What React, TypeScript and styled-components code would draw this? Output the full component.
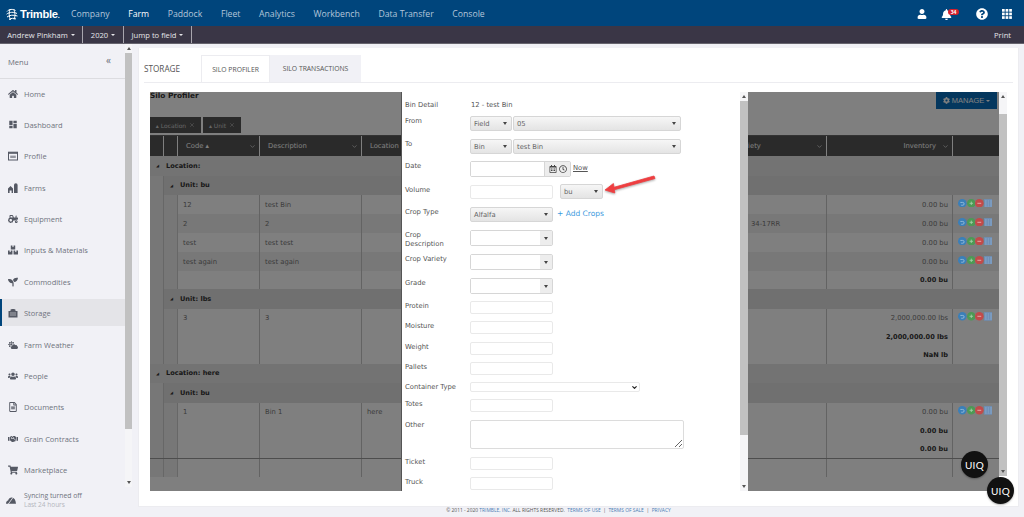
import React from "react";
import styled, { createGlobalStyle } from "styled-components";
import {
  FaBell,
  FaBoxes,
  FaCloudSun,
  FaCog,
  FaHandshake,
  FaHome,
  FaQuestionCircle,
  FaRegCalendarAlt,
  FaRegClock,
  FaRegFileAlt,
  FaSeedling,
  FaShoppingCart,
  FaTractor,
  FaUser,
  FaUsers,
} from "react-icons/fa";
import { MdDashboard } from "react-icons/md";
import { ChevronDown, X } from "lucide-react";

const GlobalStyle = createGlobalStyle`
  * { box-sizing: border-box; }
  html, body { margin: 0; padding: 0; background: #f1f1f6; }
  input, textarea, select { font-family: "DejaVu Sans", sans-serif; outline: none; }
`;

const COLUMNS = "14px 14px 82px 102px 100px 267px 98px 126px 46px";
const navLinks = ["Company", "Farm", "Paddock", "Fleet", "Analytics", "Workbench", "Data Transfer", "Console"];

const ProfileIcon = () => (
  <svg width="10" height="10" viewBox="0 0 10 10">
    <rect x="0.5" y="1.2" width="9" height="7.8" fill="none" stroke="currentColor" />
    <rect x="0.5" y="1.2" width="9" height="1.6" fill="currentColor" />
    <rect x="2.2" y="4.6" width="5.6" height="2.4" fill="currentColor" opacity="0.6" />
  </svg>
);

const FarmsIcon = () => (
  <svg width="10" height="10" viewBox="0 0 10 10" fill="currentColor">
    <path d="M0 10V5.5L2.6 3l2.4 2.5V10H3.6V7.4H1.6V10z" />
    <path d="M6 10V2a1.6 1.6 0 0 1 3.6 0v8z" />
  </svg>
);

const StorageIcon = () => (
  <svg width="10" height="10" viewBox="0 0 10 10" fill="currentColor">
    <path d="M2.5 1.8C2.5.6 7.5.6 7.5 1.8V3H9.5v6.5H.5V3h2z" />
    <path d="M2 5h6M2 7h6" stroke="#e4e4e8" strokeWidth="0.6" />
  </svg>
);

const SyncOffIcon = () => (
  <svg width="11" height="10" viewBox="0 0 11 10" fill="currentColor">
    <path d="M0 9c0-2 1-3.2 2.3-3.5C3 3.2 5 1.8 7 2.3 9 2.8 10.7 5 11 9z" />
    <path d="M2.5 9.5L8.5 1.2" stroke="#f1f1f6" strokeWidth="0.9" />
  </svg>
);

const GridIcon = () => (
  <svg width="10" height="10" viewBox="0 0 10 10" fill="#fff">
    {[0, 3.6, 7.2].flatMap((y) =>
      [0, 3.6, 7.2].map((x) => <rect key={`${x}-${y}`} x={x} y={y} width="2.7" height="2.7" />)
    )}
  </svg>
);

const GlobeIcon = () => (
  <svg width="13" height="13" viewBox="0 0 13 13" fill="none" stroke="#fff" strokeWidth="1">
    <path d="M1 3.5C3 1 7 .8 9.5 2.5M.6 6.2C3.5 3.8 8 3.8 11 5.5M1 9c2.8-2.2 6.5-2.2 10.5-1M3 11.5c2-1.5 5-1.5 7-.5" />
    <path d="M4 1.2C2.8 4.5 3 8.5 4.5 12M7.8 1.3c1.4 3 1.6 7 .4 10.2" />
  </svg>
);

const sideItems: { label: string; icon: React.ReactNode; active?: boolean }[] = [
  { label: "Home", icon: <FaHome size={10} /> },
  { label: "Dashboard", icon: <MdDashboard size={11} /> },
  { label: "Profile", icon: <ProfileIcon /> },
  { label: "Farms", icon: <FarmsIcon /> },
  { label: "Equipment", icon: <FaTractor size={10} /> },
  { label: "Inputs & Materials", icon: <FaBoxes size={10} /> },
  { label: "Commodities", icon: <FaSeedling size={10} /> },
  { label: "Storage", icon: <StorageIcon />, active: true },
  { label: "Farm Weather", icon: <FaCloudSun size={10} /> },
  { label: "People", icon: <FaUsers size={10} /> },
  { label: "Documents", icon: <FaRegFileAlt size={10} /> },
  { label: "Grain Contracts", icon: <FaHandshake size={10} /> },
  { label: "Marketplace", icon: <FaShoppingCart size={10} /> },
];

const ScrollBar = ({ width, height, offset, thumb }: { width: number; height: number; offset: number; thumb: number }) => (
  <Track $w={width} $h={height}>
    <TrackArrow $up />
    <Thumb $offset={offset} $h={thumb} />
    <TrackArrow />
  </Track>
);

const RowActions = () => (
  <Actions>
    <svg viewBox="0 0 8 8">
      <circle cx="4" cy="4" r="4" fill="#3b7fb8" />
      <path d="M2.2 3.2h2.2a1.3 1.3 0 0 1 0 2.6H3" fill="none" stroke="#9cc0dc" strokeWidth="0.8" />
    </svg>
    <svg viewBox="0 0 8 8">
      <circle cx="4" cy="4" r="4" fill="#4d9a55" />
      <path d="M4 2.4v3.200M2.4 4h3.200" stroke="#a6cfa9" strokeWidth="0.8" />
    </svg>
    <svg viewBox="0 0 8 8">
      <circle cx="4" cy="4" r="4" fill="#c24a4a" />
      <path d="M2.2 4h3.600" stroke="#e2aaaa" strokeWidth="0.9" />
    </svg>
    <svg viewBox="0 0 8 8">
      <rect x="0.3" y="0.3" width="7.4" height="7.4" fill="#7c9cc0" stroke="#6a8cb4" strokeWidth="0.6" />
      <path d="M3 1v6M5.2 1v6" stroke="#5f82ad" strokeWidth="0.5" />
    </svg>
  </Actions>
);

const DataRow = ({
  code,
  desc,
  location,
  variety,
  amount,
  alt,
}: {
  code: string;
  desc: string;
  location?: string;
  variety?: string;
  amount: string;
  alt?: boolean;
}) => (
  <Row $alt={alt}>
    <Indent />
    <Indent />
    <Cell>{code}</Cell>
    <Cell>{desc}</Cell>
    <Cell>{location}</Cell>
    <Cell />
    <Cell $pad={22}>{variety}</Cell>
    <Cell $right>{amount}</Cell>
    <Cell $last>
      <RowActions />
    </Cell>
  </Row>
);

const TotalRow = ({ amount }: { amount?: string }) => (
  <Row $total>
    <Indent />
    <Indent />
    <Cell />
    <Cell />
    <Cell />
    <Cell />
    <Cell />
    <Cell $right $bold>
      {amount}
    </Cell>
    <Cell $last />
  </Row>
);

const UnitHeader = ({ label }: { label: string }) => (
  <UnitRow>
    <Indent />
    <UnitLabel>
      <Toggle>◢</Toggle>
      {label}
    </UnitLabel>
  </UnitRow>
);

const DropDown = ({ width, value }: { width: number; value: string }) => (
  <Drop $w={width}>
    <span>{value}</span>
    <Caret />
  </Drop>
);

const Combo = () => (
  <ComboBox>
    <input />
    <ComboBtn>
      <Caret />
    </ComboBtn>
  </ComboBox>
);

const Field = ({ label, h, children }: { label: React.ReactNode; h: number; children?: React.ReactNode }) => (
  <FormRow $h={h}>
    <FormLabel>{label}</FormLabel>
    {children}
  </FormRow>
);

export default function App() {
  return (
    <Page>
      <GlobalStyle />
      <TopBar>
        <Logo>
          <GlobeIcon />
          <LogoText>
            Trimble<small>.</small>
          </LogoText>
        </Logo>
        <Nav>
          {navLinks.map((link) => (
            <NavLink key={link} $active={link === "Farm"}>
              {link}
            </NavLink>
          ))}
        </Nav>
        <TopIcons>
          <FaUser size={10} color="#fff" />
          <Bell>
            <FaBell size={11} color="#fff" />
            <Badge>34</Badge>
          </Bell>
          <FaQuestionCircle size={12} color="#fff" />
          <GridIcon />
        </TopIcons>
      </TopBar>
      <SubBar>
        <SubItem $w={83}>
          Andrew Pinkham <SubCaret />
        </SubItem>
        <SubItem $w={41}>
          2020 <SubCaret />
        </SubItem>
        <SubItem $w={68}>
          Jump to field <SubCaret />
        </SubItem>
        <PrintLink>Print</PrintLink>
      </SubBar>
      <Body>
        <Sidebar>
          <MenuHead>
            <span>Menu</span>
            <Collapse>«</Collapse>
          </MenuHead>
          {sideItems.map((item) => (
            <SideItem key={item.label} $active={item.active}>
              <SideIcon>{item.icon}</SideIcon>
              {item.label}
            </SideItem>
          ))}
          <Sync>
            <SideIcon>
              <SyncOffIcon />
            </SideIcon>
            <div>
              <SyncTitle>Syncing turned off</SyncTitle>
              <SyncSub>Last 24 hours</SyncSub>
            </div>
          </Sync>
        </Sidebar>
        <ScrollBar width={7} height={443} offset={9} thumb={376} />
        <Main>
          <Card>
            <CardHead>
              <CardTitle>STORAGE</CardTitle>
              <Tab $w={69} $active>
                SILO PROFILER
              </Tab>
              <Tab $w={91}>SILO TRANSACTIONS</Tab>
            </CardHead>
            <Panel>
              <View>
                <TitleRow>
                  <ViewTitle>Silo Profiler</ViewTitle>
                  <Manage>
                    <FaCog size={7} /> MANAGE <SubCaret />
                  </Manage>
                </TitleRow>
                <Chips>
                  <Chip $w={51}>
                    ▴ Location <X size={6} />
                  </Chip>
                  <Chip $w={38}>
                    ▴ Unit <X size={6} />
                  </Chip>
                </Chips>
                <HeadRow>
                  <HeadCell />
                  <HeadCell />
                  <HeadCell>
                    Code ▴ <ChevronDown size={7} />
                  </HeadCell>
                  <HeadCell>
                    Description <ChevronDown size={7} />
                  </HeadCell>
                  <HeadCell>Location</HeadCell>
                  <HeadCell />
                  <HeadCell>
                    Variety <ChevronDown size={7} />
                  </HeadCell>
                  <HeadCell $right>
                    Inventory <ChevronDown size={7} />
                  </HeadCell>
                  <HeadCell />
                </HeadRow>
                <GroupRow>
                  <Toggle>◢</Toggle>Location:
                </GroupRow>
                <UnitHeader label="Unit: bu" />
                <DataRow code="12" desc="test Bin" amount="0.00 bu" />
                <DataRow code="2" desc="2" variety="34-17RR" amount="0.00 bu" alt />
                <DataRow code="test" desc="test test" amount="0.00 bu" />
                <DataRow code="test again" desc="test again" amount="0.00 bu" alt />
                <TotalRow amount="0.00 bu" />
                <UnitHeader label="Unit: lbs" />
                <DataRow code="3" desc="3" amount="2,000,000.00 lbs" />
                <TotalRow amount="2,000,000.00 lbs" />
                <TotalRow amount="NaN lb" />
                <GroupRow>
                  <Toggle>◢</Toggle>Location: here
                </GroupRow>
                <UnitHeader label="Unit: bu" />
                <DataRow code="1" desc="Bin 1" location="here" amount="0.00 bu" />
                <TotalRow amount="0.00 bu" />
                <TotalRow amount="0.00 bu" />
                <FootRow>
                  <TotalRow />
                </FootRow>
                <Dim />
              </View>
              <ScrollBar width={8} height={384} offset={22} thumb={362} />
              <Modal>
                <Form>
                  <Field label="Bin Detail" h={16}>
                    <Value>12 - test Bin</Value>
                  </Field>
                  <Field label="From" h={23}>
                    <DropDown width={42} value="Field" />
                    <DropDown width={168} value="05" />
                  </Field>
                  <Field label="To" h={22}>
                    <DropDown width={42} value="Bin" />
                    <DropDown width={168} value="test Bin" />
                  </Field>
                  <Field label="Date" h={24}>
                    <DateBox>
                      <input />
                      <DateAddon>
                        <FaRegCalendarAlt size={8} />
                        <FaRegClock size={8} />
                      </DateAddon>
                    </DateBox>
                    <NowLink>Now</NowLink>
                  </Field>
                  <Field label="Volume" h={22}>
                    <TextBox $h={14} />
                    <VolumeUnit>
                      <DropDown width={43} value="bu" />
                    </VolumeUnit>
                    <Arrow width="54" height="22" viewBox="0 0 54 22">
                      <path
                        d="M51 3L11 14.3l-.6-3.8L2 17l9.8 3-.5-3.3L52 5.5z"
                        fill="#ee3e40"
                        stroke="#ee3e40"
                        strokeWidth="0.8"
                        strokeLinejoin="round"
                      />
                    </Arrow>
                  </Field>
                  <Field label="Crop Type" h={23}>
                    <DropDown width={83} value="Alfalfa" />
                    <AddCrops>+ Add Crops</AddCrops>
                  </Field>
                  <Field
                    label={
                      <>
                        Crop
                        <br />
                        Description
                      </>
                    }
                    h={24}
                  >
                    <Combo />
                  </Field>
                  <Field label="Crop Variety" h={24}>
                    <Combo />
                  </Field>
                  <Field label="Grade" h={23}>
                    <Combo />
                  </Field>
                  <Field label="Protein" h={20}>
                    <TextBox />
                  </Field>
                  <Field label="Moisture" h={21}>
                    <TextBox />
                  </Field>
                  <Field label="Weight" h={20}>
                    <TextBox />
                  </Field>
                  <Field label="Pallets" h={20}>
                    <TextBox />
                  </Field>
                  <Field label="Container Type" h={17}>
                    <SelectWrap>
                      <NativeSelect />
                      <ChevronDown size={7} strokeWidth={4} />
                    </SelectWrap>
                  </Field>
                  <Field label="Totes" h={21}>
                    <TextBox />
                  </Field>
                  <Field label="Other" h={37}>
                    <TextArea />
                  </Field>
                  <Field label="Ticket" h={20}>
                    <TextBox />
                  </Field>
                  <Field label="Truck" h={14}>
                    <TextBox />
                  </Field>
                </Form>
                <ScrollBar width={8} height={399} offset={9} thumb={334} />
              </Modal>
            </Panel>
          </Card>
          <Footer>
            © 2011 - 2020 <FootLink>TRIMBLE, INC.</FootLink> ALL RIGHTS RESERVED. &nbsp;
            <FootLink>TERMS OF USE</FootLink> &nbsp;|&nbsp; <FootLink>TERMS OF SALE</FootLink> &nbsp;|&nbsp;{" "}
            <FootLink>PRIVACY</FootLink>
          </Footer>
        </Main>
      </Body>
      <Uiq $x={961} $y={451}>UIQ</Uiq>
      <Uiq $x={987} $y={477}>UIQ</Uiq>
    </Page>
  );
}

const Page = styled.div`
  position: relative;
  width: 1024px;
  height: 517px;
  overflow: hidden;
  display: flex;
  flex-direction: column;
  background: #f1f1f6;
  font-family: "Open Sans", sans-serif;
`;

const TopBar = styled.header`
  height: 26px;
  flex: none;
  display: flex;
  align-items: center;
  padding: 2px 0 0 6px;
  background: #00457c;
`;

const Logo = styled.div`
  display: flex;
  align-items: center;
  gap: 1px;
  width: 65px;
`;

const LogoText = styled.span`
  font-family: "Liberation Sans", sans-serif;
  font-weight: 700;
  font-size: 11.2px;
  letter-spacing: -0.3px;
  color: #fff;

  small {
    font-size: 7px;
  }
`;

const Nav = styled.nav`
  display: flex;
  gap: 18.6px;
`;

const NavLink = styled.span<{ $active?: boolean }>`
  font-size: 8.7px;
  color: ${({ $active }) => ($active ? "#fff" : "#b4c6da")};
`;

const TopIcons = styled.div`
  margin-left: auto;
  display: flex;
  align-items: center;
  gap: 14px;
  padding-right: 12px;
`;

const Bell = styled.div`
  position: relative;
  display: flex;
  margin-right: 10px;
`;

const Badge = styled.span`
  position: absolute;
  left: 7px;
  top: 0;
  width: 11px;
  height: 6px;
  border-radius: 3px;
  background: #d3202c;
  color: #fff;
  font-size: 5px;
  font-weight: 700;
  line-height: 6px;
  text-align: center;
`;

const SubBar = styled.div`
  height: 18px;
  flex: none;
  display: flex;
  align-items: center;
  background: #3a3646;
  border-bottom: 1px solid #66646e;
`;

const SubItem = styled.div<{ $w: number }>`
  width: ${({ $w }) => $w}px;
  height: 100%;
  display: flex;
  align-items: center;
  justify-content: center;
  gap: 3px;
  border-right: 1px solid #a8a6ae;
  color: #e6e6ea;
  font-size: 7.6px;
`;

const SubCaret = styled.i`
  display: inline-block;
  border-left: 2px solid transparent;
  border-right: 2px solid transparent;
  border-top: 2px solid currentColor;
`;

const PrintLink = styled.span`
  margin-left: auto;
  padding-right: 13px;
  color: #e6e6ea;
  font-size: 7.6px;
`;

const Body = styled.div`
  flex: 1;
  min-height: 0;
  display: flex;
`;

const Sidebar = styled.aside`
  width: 125px;
  flex: none;
  display: flex;
  flex-direction: column;
`;

const MenuHead = styled.div`
  height: 35px;
  flex: none;
  display: flex;
  align-items: center;
  justify-content: space-between;
  padding: 1px 14px 0 8px;
  border-bottom: 1px solid #dcdce0;
  color: #6a6e78;
  font-size: 7.6px;
`;

const Collapse = styled.span`
  font-size: 10px;
  margin-top: -3px;
`;

const SideItem = styled.div<{ $active?: boolean }>`
  height: 27px;
  margin-bottom: 4.4px;
  flex: none;
  display: flex;
  align-items: center;
  gap: 6px;
  padding-top: 2px;
  border-left: ${({ $active }) => ($active ? "2px solid #00457c" : "0")};
  padding-left: ${({ $active }) => ($active ? "6px" : "8px")};
  background: ${({ $active }) => ($active ? "#e4e4e8" : "transparent")};
  color: #6f737d;
  font-size: 7.5px;
`;

const SideIcon = styled.span`
  width: 10px;
  display: flex;
  justify-content: center;
  color: #555964;
`;

const Sync = styled.div`
  display: flex;
  align-items: center;
  gap: 8px;
  padding: 4px 0 0 6px;
`;

const SyncTitle = styled.div`
  font-size: 6.8px;
  line-height: 9px;
  color: #6f737d;
`;

const SyncSub = styled.div`
  font-size: 6.5px;
  line-height: 9px;
  color: #b3b6bd;
`;

const Track = styled.div<{ $w: number; $h: number }>`
  position: relative;
  width: ${({ $w }) => $w}px;
  height: ${({ $h }) => $h}px;
  flex: none;
  background: #f5f5f7;
`;

const Thumb = styled.div<{ $offset: number; $h: number }>`
  margin-top: ${({ $offset }) => $offset}px;
  height: ${({ $h }) => $h}px;
  background: #c1c1c1;
`;

const TrackArrow = styled.i<{ $up?: boolean }>`
  position: absolute;
  left: calc(50% - 2px);
  ${({ $up }) => ($up ? "top: 3px;" : "bottom: 3px;")}
  border-left: 2px solid transparent;
  border-right: 2px solid transparent;
  ${({ $up }) => ($up ? "border-bottom: 3px solid #555;" : "border-top: 3px solid #555;")}
`;

const Main = styled.main`
  flex: 1;
  min-width: 0;
  display: flex;
  flex-direction: column;
  padding: 4px 5px 0 6px;
`;

const Card = styled.section`
  height: 459px;
  flex: none;
  background: #fff;
  border: 1px solid #ececf0;
  border-top: 0;
`;

const CardHead = styled.div`
  height: 35px;
  margin: 0 5px;
  display: flex;
  align-items: flex-end;
  border-bottom: 1px solid #ececf0;
`;

const CardTitle = styled.h2`
  width: 57px;
  margin: 0 0 8px;
  font-weight: 400;
  font-size: 8.2px;
  color: #555;
`;

const Tab = styled.div<{ $active?: boolean; $w: number }>`
  width: ${({ $w }) => $w}px;
  height: 27px;
  display: flex;
  align-items: center;
  justify-content: center;
  font-size: 6.8px;
  white-space: nowrap;
  color: #555;
  background: ${({ $active }) => ($active ? "#fff" : "#f1f1f6")};
  border: ${({ $active }) => ($active ? "1px solid #ececf0" : "0")};
  border-bottom: 0;
`;

const Panel = styled.div`
  position: relative;
  margin: 9px 11px 0;
  height: 399px;
  display: flex;
  align-items: flex-start;
`;

const View = styled.div`
  position: relative;
  width: 849px;
  height: 399px;
  flex: none;
  background: #fff;
  font-family: "DejaVu Sans", sans-serif;
  font-size: 6.8px;
  color: #777;
`;

const Dim = styled.div`
  position: absolute;
  inset: 0;
  background: rgba(0, 0, 0, 0.5);
`;

const TitleRow = styled.div`
  height: 25px;
  display: flex;
  justify-content: space-between;
  align-items: flex-start;
  padding-right: 2px;
`;

const ViewTitle = styled.h3`
  margin: -2px 0 0;
  font-size: 7.35px;
  line-height: 11px;
  font-weight: 700;
  color: #333;
`;

const Manage = styled.div`
  width: 61px;
  height: 17px;
  display: flex;
  align-items: center;
  justify-content: center;
  gap: 2px;
  background: #086fbd;
  color: #fff;
  font-family: "Liberation Sans", sans-serif;
  font-size: 7.5px;
`;

const Chips = styled.div`
  height: 18px;
  display: flex;
  gap: 2px;
`;

const Chip = styled.div<{ $w: number }>`
  width: ${({ $w }) => $w}px;
  height: 16px;
  display: flex;
  align-items: center;
  justify-content: center;
  gap: 3px;
  background: #555;
  color: #ccc;
  font-size: 6px;
`;

const Row = styled.div<{ $total?: boolean; $alt?: boolean }>`
  display: grid;
  grid-template-columns: ${COLUMNS};
  height: ${({ $total }) => ($total ? "18px" : "19px")};
  background: ${({ $alt }) => ($alt ? "#f1f1f1" : "transparent")};
`;

const HeadRow = styled.div`
  display: grid;
  grid-template-columns: ${COLUMNS};
  height: 21px;
  background: #555;
  color: #fff;
  border-top: 1px solid #666;
`;

const HeadCell = styled.div<{ $right?: boolean }>`
  display: flex;
  align-items: center;
  justify-content: ${({ $right }) => ($right ? "flex-end" : "space-between")};
  gap: 6px;
  padding: 0 3px 0 8px;
  border-right: 1px solid #fff;
  font-size: 6.8px;
  color: #fff;

  &:last-child {
    border-right: 0;
  }

  svg {
    flex: none;
  }
`;

const Cell = styled.div<{ $right?: boolean; $bold?: boolean; $pad?: number; $last?: boolean }>`
  display: flex;
  align-items: center;
  justify-content: ${({ $right }) => ($right ? "flex-end" : "flex-start")};
  padding: 0 4px 0 ${({ $pad }) => $pad ?? 5}px;
  border-right: ${({ $last }) => ($last ? "0" : "1px solid #c6c6c6")};
  font-weight: ${({ $bold }) => ($bold ? 700 : 400)};
  font-size: ${({ $bold }) => ($bold ? "6.6px" : "6.8px")};
  color: ${({ $bold }) => ($bold ? "#333" : "#777")};
  white-space: nowrap;
  min-width: 0;
`;

const Indent = styled.div`
  background: #efefef;
  border-right: 1px solid #cfcfcf;
`;

const GroupRow = styled.div`
  height: 19.5px;
  display: flex;
  align-items: center;
  padding-left: 6px;
  background: #e6e6e6;
  font-size: 6.6px;
  font-weight: 700;
  color: #333;
`;

const UnitRow = styled.div`
  height: 19.5px;
  display: grid;
  grid-template-columns: 14px 1fr;
`;

const UnitLabel = styled.div`
  display: flex;
  align-items: center;
  padding-left: 6px;
  background: #e0e0e0;
  font-size: 6.6px;
  font-weight: 700;
  color: #333;
`;

const Toggle = styled.span`
  width: 10px;
  font-size: 4px;
  color: #333;
`;

const FootRow = styled.div`
  border-top: 1.5px solid #9a9a9a;
`;

const Actions = styled.div`
  position: relative;
  z-index: 1;
  display: flex;
  margin: -3px 0 0 0;

  svg {
    width: 8.6px;
    height: 8.6px;
    flex: none;
  }
`;

const Modal = styled.div`
  position: absolute;
  left: 251px;
  top: 0;
  width: 347px;
  height: 399px;
  display: flex;
  justify-content: space-between;
  background: #fff;
  border-left: 1px solid #555;
  font-family: "DejaVu Sans", sans-serif;
  font-size: 6.8px;
  color: #555;
`;

const Form = styled.div`
  flex: 1;
  padding: 8px 0 0 3px;
`;

const FormRow = styled.div<{ $h: number }>`
  position: relative;
  height: ${({ $h }) => $h}px;
  display: flex;
  align-items: flex-start;
`;

const FormLabel = styled.div`
  width: 65px;
  flex: none;
  margin-top: 1px;
  line-height: 8.8px;
`;

const Value = styled.span`
  margin-top: 1px;
  line-height: 8px;
  padding-left: 1px;
`;

const Drop = styled.div<{ $w: number }>`
  width: ${({ $w }) => $w}px;
  height: 15px;
  flex: none;
  display: flex;
  align-items: center;
  justify-content: space-between;
  padding: 0 4px 0 3px;
  margin-right: 1px;
  background: linear-gradient(#f6f6f6, #e4e4e4);
  border: 1px solid #d6d6d6;
  border-radius: 2px;
  color: #666;
`;

const Caret = styled.i`
  border-left: 2px solid transparent;
  border-right: 2px solid transparent;
  border-top: 3px solid #444;
`;

const ComboBox = styled.div`
  width: 83px;
  height: 16px;
  display: flex;
  border: 1px solid #d6d6d6;
  border-radius: 2px;

  input {
    width: 69px;
    border: 0;
    padding: 0;
    background: #fff;
  }
`;

const ComboBtn = styled.div`
  flex: 1;
  display: flex;
  align-items: center;
  justify-content: center;
  background: #ededed;
`;

const DateBox = styled.div`
  width: 101px;
  height: 16px;
  display: flex;
  border: 1px solid #d6d6d6;
  border-radius: 2px;

  input {
    width: 73px;
    border: 0;
    padding: 0;
  }
`;

const DateAddon = styled.div`
  flex: 1;
  display: flex;
  align-items: center;
  justify-content: center;
  gap: 2px;
  background: #ededed;
  border-left: 1px solid #d6d6d6;
  color: #444;
`;

const NowLink = styled.a`
  margin: 3px 0 0 2px;
  text-decoration: underline;
  color: #555;
  font-size: 6.8px;
`;

const TextBox = styled.input<{ $h?: number }>`
  width: 83px;
  height: ${({ $h }) => $h ?? 13}px;
  flex: none;
  padding: 0;
  border: 1px solid #e9e9e9;
  border-radius: 2px;
  background: #fff;
`;

const VolumeUnit = styled.div`
  margin: -1px 0 0 7px;
`;

const Arrow = styled.svg`
  position: absolute;
  left: 198px;
  top: -12px;
  filter: drop-shadow(0 1px 1px rgba(0, 0, 0, 0.35));
`;

const AddCrops = styled.a`
  margin: 2px 0 0 3px;
  color: #3c9ade;
  font-size: 7.5px;
  white-space: nowrap;
`;

const SelectWrap = styled.div`
  position: relative;
  display: flex;

  svg {
    position: absolute;
    right: 2px;
    top: 1.5px;
    color: #222;
  }
`;

const NativeSelect = styled.select`
  width: 170px;
  height: 10px;
  padding: 0;
  appearance: none;
  border: 1px solid #e9e9e9;
  border-radius: 2px;
  background: #fff;
  font-size: 6px;
`;

const TextArea = styled.textarea`
  width: 214px;
  height: 29px;
  padding: 0;
  border: 1px solid #dcdcdc;
  border-radius: 2px;
`;

const Footer = styled.footer`
  text-align: center;
  padding-right: 40px;
  font-size: 4.9px;
  line-height: 6px;
  color: #555;
`;

const FootLink = styled.a`
  color: #4a7cb5;
`;

const Uiq = styled.div<{ $x: number; $y: number }>`
  position: absolute;
  left: ${({ $x }) => $x}px;
  top: ${({ $y }) => $y}px;
  width: 27px;
  height: 27px;
  display: flex;
  align-items: center;
  justify-content: center;
  border-radius: 50%;
  background: #111;
  color: #fff;
  font-family: "Lato", sans-serif;
  font-size: 10px;
  letter-spacing: 0.3px;
  box-shadow: 0 1px 2px rgba(0, 0, 0, 0.3);
`;
